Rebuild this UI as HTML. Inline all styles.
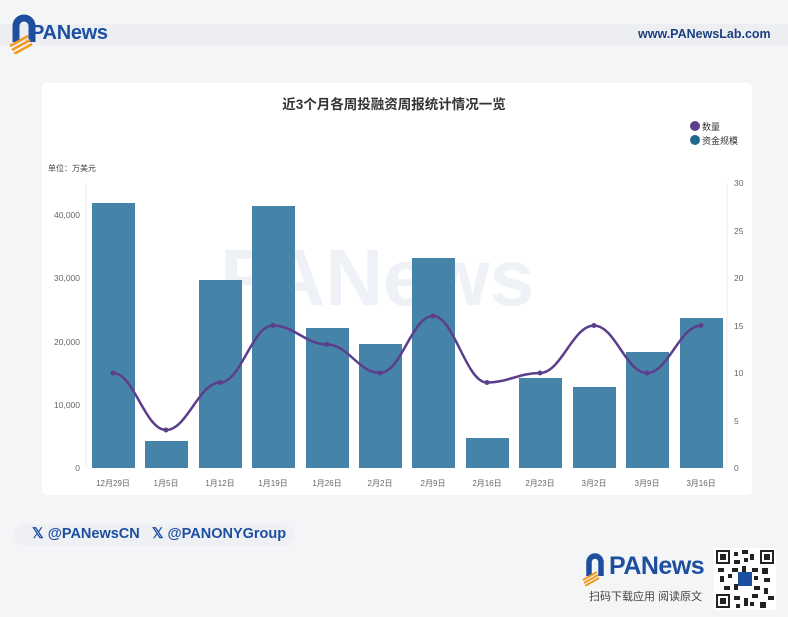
<!DOCTYPE html>
<html><head><meta charset="utf-8"><style>
body{margin:0;width:788px;height:617px;background:#f4f5f7;font-family:"Liberation Sans","Noto Sans CJK SC",sans-serif;position:relative;overflow:hidden}
.abs{position:absolute}
</style></head><body>
<div class="abs" style="left:0;top:24px;width:788px;height:21px;background:#eceef2"></div>
<svg class="abs" style="left:8px;top:14px" width="32" height="40" viewBox="0 0 32 40">
<path d="M8 28 V12 a8 8 0 0 1 16 0 V28" fill="none" stroke="#1d4fa0" stroke-width="7"/>
<path d="M2 32 L20 22 M4 36 L22 26 M6 40 L24 30" stroke="#f29a1f" stroke-width="2.5"/>
</svg>
<div class="abs" style="left:31px;top:22px;font-size:20px;font-weight:bold;color:#1d4fa0;letter-spacing:-0.3px">PANews</div>
<div class="abs" style="left:638px;top:27px;font-size:12.5px;font-weight:bold;color:#1d3f80">www.PANewsLab.com</div>

<div class="abs" style="left:42px;top:83px;width:710px;height:412px;background:#fff;border-radius:4px"></div>
<div class="abs" style="left:0;top:93px;width:788px;text-align:center;font-size:13.5px;font-weight:bold;color:#333">近3个月各周投融资周报统计情况一览</div>
<div class="abs" style="left:690px;top:120px;font-size:9px;color:#333;line-height:14px">
<div><span style="display:inline-block;width:10px;height:10px;border-radius:50%;background:#5b3f8c;vertical-align:-1px;margin-right:2px"></span>数量</div>
<div><span style="display:inline-block;width:10px;height:10px;border-radius:50%;background:#1e6a8e;vertical-align:-1px;margin-right:2px"></span>资金规模</div>
</div>
<div class="abs" style="left:48px;top:163px;font-size:8px;color:#444">单位：万美元</div>

<svg class="abs" style="left:0;top:0" width="788" height="617">
<text x="220" y="305" font-size="80" font-weight="bold" fill="#eef1f6" font-family="Liberation Sans">PANews</text>
<g font-size="8.5" fill="#666" font-family="Liberation Sans" text-anchor="end">
<text x="80" y="471">0</text><text x="80" y="408">10,000</text><text x="80" y="345">20,000</text><text x="80" y="281">30,000</text><text x="80" y="218">40,000</text>
</g>
<g font-size="8.5" fill="#666" font-family="Liberation Sans">
<text x="734" y="471">0</text><text x="734" y="424">5</text><text x="734" y="376">10</text><text x="734" y="329">15</text><text x="734" y="281">20</text><text x="734" y="234">25</text><text x="734" y="186">30</text>
</g>
<line x1="86" y1="183" x2="86" y2="468" stroke="#eee"/>
<line x1="727" y1="183" x2="727" y2="468" stroke="#eee"/>
<g fill="#4683a8">
<rect x="92" y="203" width="43" height="265"/><rect x="145" y="441" width="43" height="27"/>
<rect x="199" y="280" width="43" height="188"/><rect x="252" y="206" width="43" height="262"/>
<rect x="306" y="328" width="43" height="140"/><rect x="359" y="344" width="43" height="124"/>
<rect x="412" y="258" width="43" height="210"/><rect x="466" y="438" width="43" height="30"/>
<rect x="519" y="378" width="43" height="90"/><rect x="573" y="387" width="43" height="81"/>
<rect x="626" y="352" width="43" height="116"/><rect x="680" y="318" width="43" height="150"/>
</g>
<path d="M113,373 C134,373 145,430 166,430 C187,430 199,382.5 220,382.5 C241,382.5 252,325.5 273,325.5 C294,325.5 306,344.5 327,344.5 C348,344.5 359,373 380,373 C401,373 412,316 433,316 C454,316 466,382.5 487,382.5 C508,382.5 519,373 540,373 C561,373 573,325.5 594,325.5 C615,325.5 626,373 647,373 C668,373 680,325.5 701,325.5" fill="none" stroke="#5b3f8c" stroke-width="2.5"/>
<g fill="#5b3f8c">
<circle cx="113" cy="373" r="2.5"/><circle cx="166" cy="430" r="2.5"/><circle cx="220" cy="382.5" r="2.5"/><circle cx="273" cy="325.5" r="2.5"/><circle cx="327" cy="344.5" r="2.5"/><circle cx="380" cy="373" r="2.5"/><circle cx="433" cy="316" r="2.5"/><circle cx="487" cy="382.5" r="2.5"/><circle cx="540" cy="373" r="2.5"/><circle cx="594" cy="325.5" r="2.5"/><circle cx="647" cy="373" r="2.5"/><circle cx="701" cy="325.5" r="2.5"/>
</g>
<g font-size="8" fill="#666" text-anchor="middle" font-family="Liberation Sans,Noto Sans CJK SC">
<text x="113" y="486">12月29日</text><text x="166" y="486">1月5日</text><text x="220" y="486">1月12日</text><text x="273" y="486">1月19日</text><text x="327" y="486">1月26日</text><text x="380" y="486">2月2日</text><text x="433" y="486">2月9日</text><text x="487" y="486">2月16日</text><text x="540" y="486">2月23日</text><text x="594" y="486">3月2日</text><text x="647" y="486">3月9日</text><text x="701" y="486">3月16日</text>
</g>
</svg>

<div class="abs" style="left:14px;top:524px;width:280px;height:22px;background:#eef0f4;border-radius:11px"></div>
<div class="abs" style="left:32px;top:526px;font-size:14.5px;font-weight:bold;color:#1d4fa0">𝕏 @PANewsCN &nbsp; 𝕏 @PANONYGroup</div>

<svg class="abs" style="left:582px;top:552px" width="26" height="34" viewBox="0 0 26 34">
<path d="M7 24 V10 a6 6 0 0 1 12 0 V24" fill="none" stroke="#1d4fa0" stroke-width="5.5"/>
<path d="M1 28 L15 20 M2 31 L16 23 M3 34 L17 26" stroke="#f29a1f" stroke-width="2"/>
</svg>
<div class="abs" style="left:609px;top:552px;font-size:25px;font-weight:bold;color:#1d4fa0;letter-spacing:-0.5px">PANews</div>
<div class="abs" style="left:589px;top:588px;font-size:11px;color:#444">扫码下载应用 阅读原文</div>
<div class="abs" style="left:714px;top:548px;width:62px;height:62px;background:#fff"></div>
<svg class="abs" style="left:716px;top:550px" width="58" height="58" viewBox="0 0 29 29">
<g fill="#222">
<rect x="0" y="0" width="7" height="7"/><rect x="22" y="0" width="7" height="7"/><rect x="0" y="22" width="7" height="7"/>
<path d="M9 1h2v2h-2zM13 0h3v2h-3zM17 2h2v3h-2zM9 5h3v2h-3zM14 4h2v2h-2zM8 9h3v2h-3zM13 8h2v3h-2zM18 9h3v2h-3zM23 9h3v3h-3zM1 9h3v2h-3zM2 13h2v3h-2zM6 12h2v2h-2zM19 13h2v2h-2zM24 14h3v2h-3zM9 17h2v3h-2zM4 18h3v2h-3zM19 18h3v2h-3zM24 19h2v3h-2zM9 23h3v2h-3zM14 24h2v4h-2zM18 22h3v2h-3zM22 26h3v3h-3zM26 23h3v2h-3zM10 27h2v2h-2zM17 26h2v2h-2z"/>
</g>
<rect x="1" y="1" width="5" height="5" fill="#fff"/><rect x="2" y="2" width="3" height="3" fill="#222"/>
<rect x="23" y="1" width="5" height="5" fill="#fff"/><rect x="24" y="2" width="3" height="3" fill="#222"/>
<rect x="1" y="23" width="5" height="5" fill="#fff"/><rect x="2" y="24" width="3" height="3" fill="#222"/>
<rect x="11" y="11" width="7" height="7" fill="#1d4fa0"/>
</svg>
</body></html>
